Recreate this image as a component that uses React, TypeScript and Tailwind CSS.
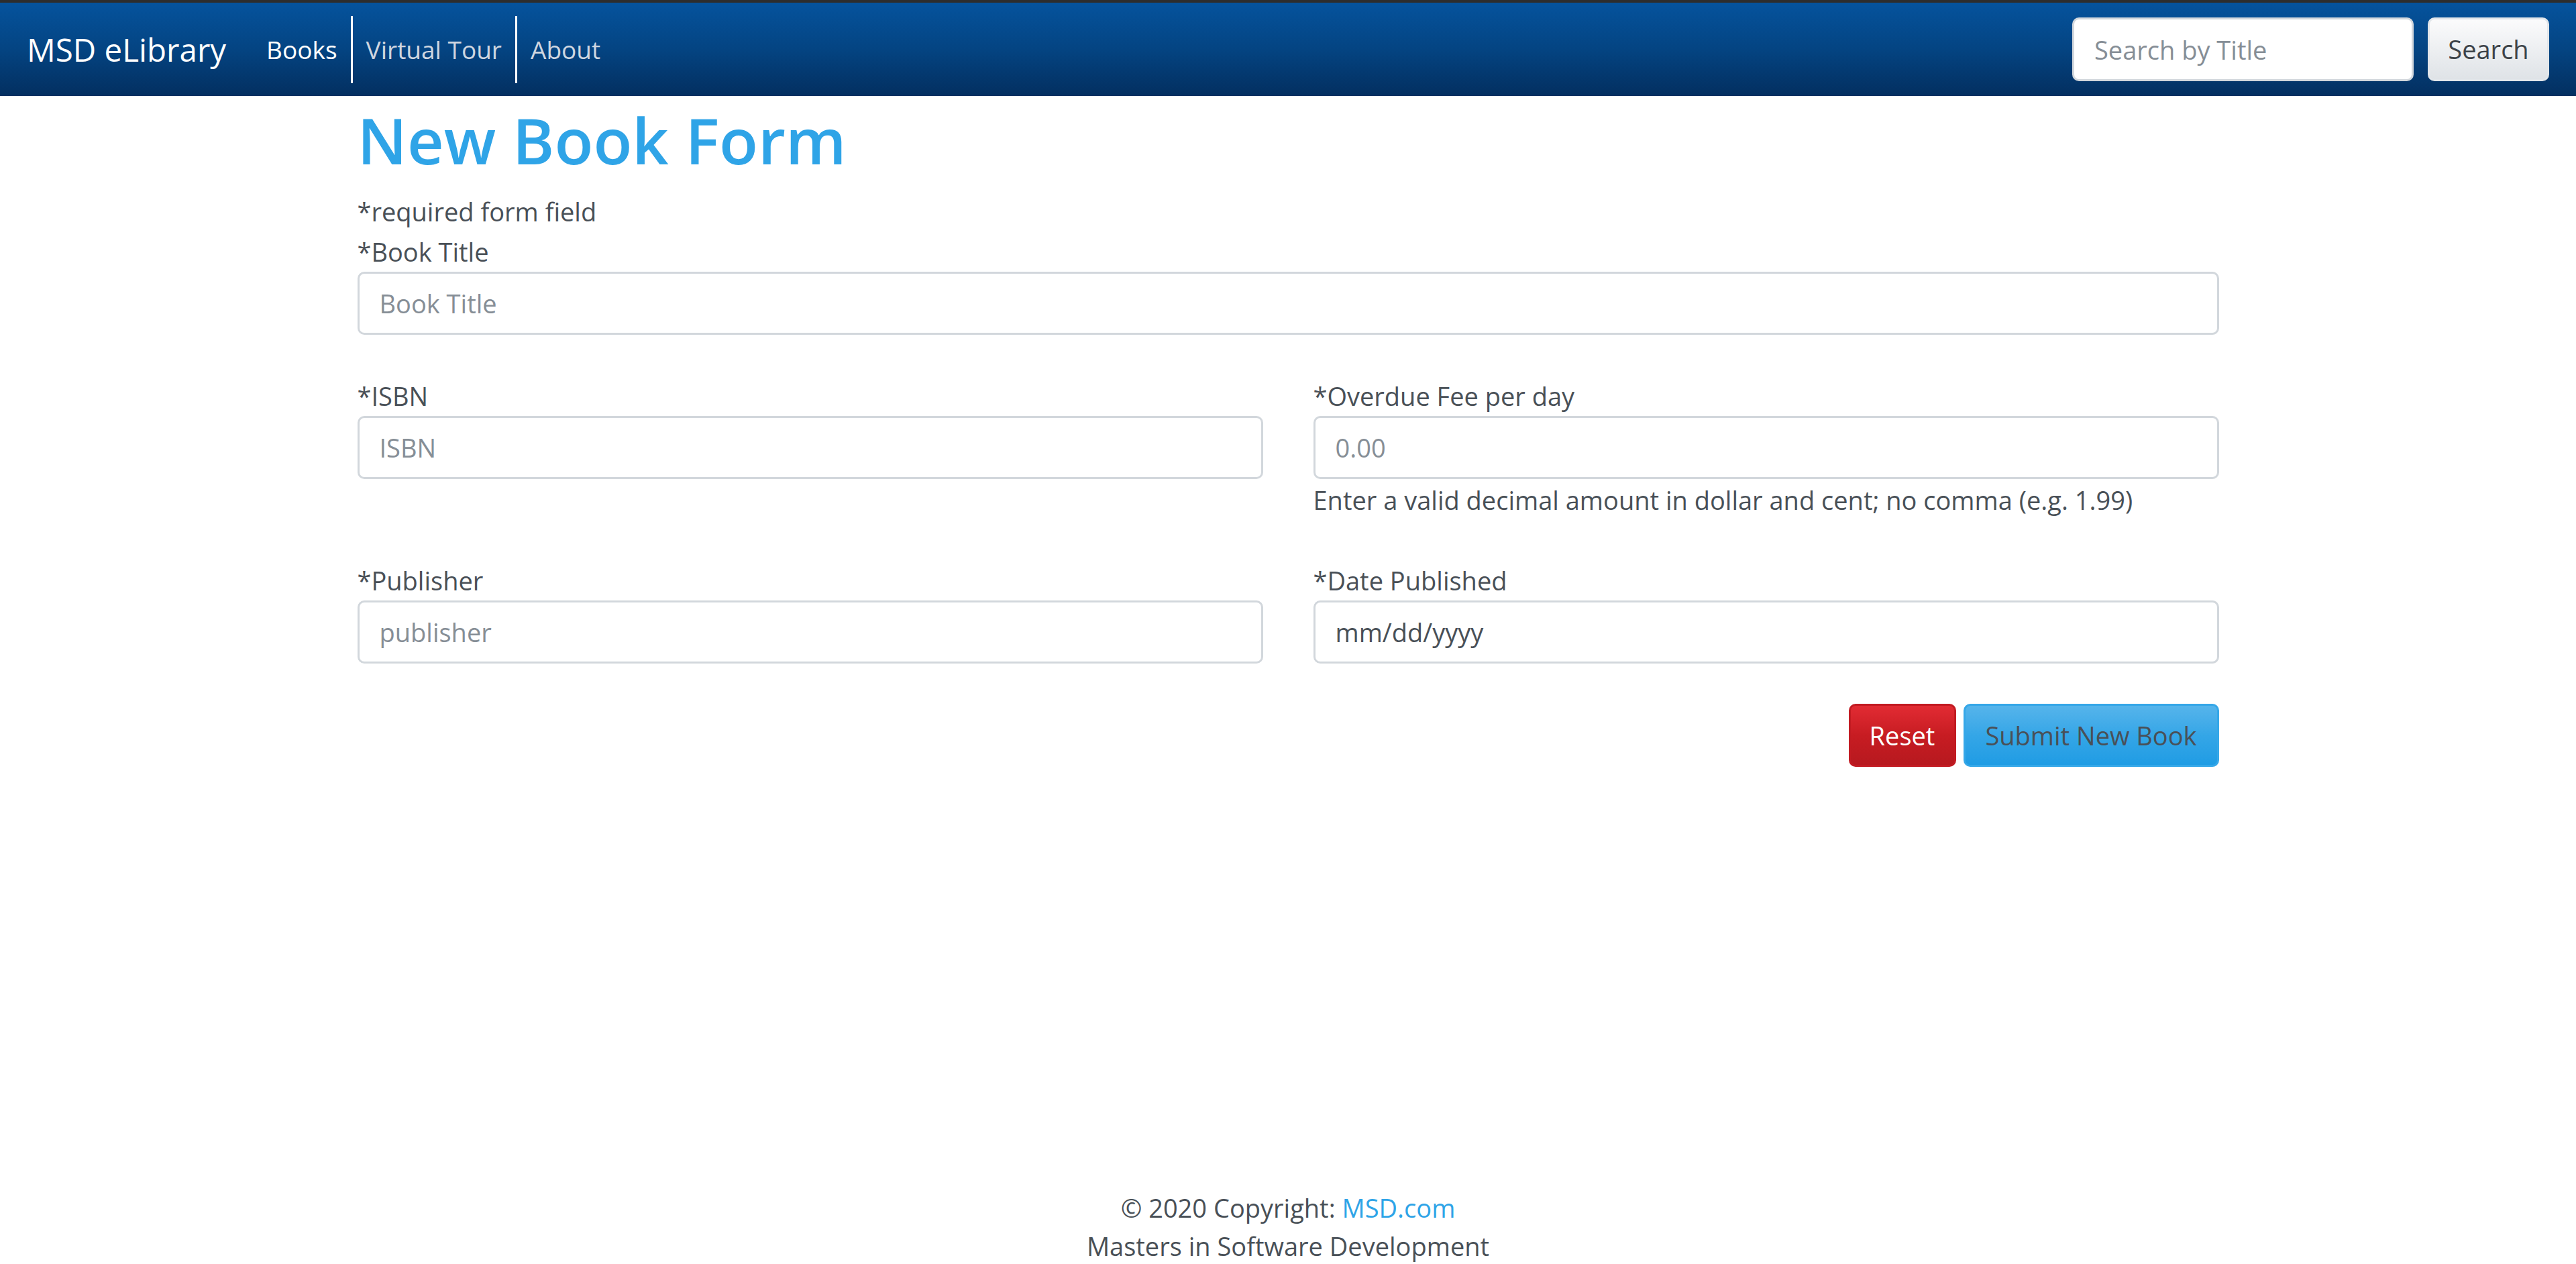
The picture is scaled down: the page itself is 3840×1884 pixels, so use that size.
import { useState } from 'react';

const navLinks = [
  { label: 'Books', active: true, divider: true },
  { label: 'Virtual Tour', active: false, divider: true },
  { label: 'About', active: false, divider: false },
];

const inputClass =
  'block w-full h-[94px] px-[30px] rounded-[10px] border-[3px] border-[#d2d7dc] bg-white text-[38px] text-[#495057] placeholder:text-[#868e96] outline-none';

function Field({
  label,
  placeholder,
  help,
  darkPlaceholder,
}: {
  label: string;
  placeholder: string;
  help?: string;
  darkPlaceholder?: boolean;
}) {
  const [value, setValue] = useState('');
  return (
    <div>
      <label className="block leading-[60px]">{label}</label>
      <input
        type="text"
        value={value}
        onChange={(e) => setValue(e.target.value)}
        placeholder={placeholder}
        className={`${inputClass} ${darkPlaceholder ? 'placeholder:text-[#495057]' : ''}`}
      />
      {help && <p className="mt-px leading-[60px]">{help}</p>}
    </div>
  );
}

export default function App() {
  return (
    <div className="min-h-screen flex flex-col bg-white font-['Open_Sans',sans-serif] text-[38px] text-[#495057]">
      <div className="h-[4px] bg-[#2d2d2d]" />
      <nav className="h-[139px] px-[40px] flex items-center bg-linear-to-b from-[#05539d] via-[#044482] to-[#032f60]">
        <a href="#" className="text-[47.5px] leading-[75px] text-white mr-[40px]">
          MSD eLibrary
        </a>
        <ul className="flex items-center">
          {navLinks.map((link) => (
            <li key={link.label}>
              <a
                href="#"
                className={`block h-[100px] px-[20px] text-[37px] leading-[100px] ${
                  link.active ? 'text-white' : 'text-[#cfd6e0]'
                } ${link.divider ? 'border-r-[3px] border-white' : ''}`}
              >
                {link.label}
              </a>
            </li>
          ))}
        </ul>
        <form className="ml-auto flex items-center" onSubmit={(e) => e.preventDefault()}>
          <input
            type="search"
            placeholder="Search by Title"
            className="w-[509px] h-[95px] px-[30px] mr-[21px] rounded-[10px] border-[3px] border-[#d2d7dc] bg-white text-[38px] text-[#495057] placeholder:text-[#868e96] outline-none"
          />
          <button className="w-[181px] h-[95px] rounded-[10px] border-[3px] border-[#e2e6ea] bg-linear-to-b from-[#fbfbfc] to-[#dfe3e7] text-[#3d4349] text-[38px]">
            Search
          </button>
        </form>
      </nav>

      <main className="w-[2775px] mx-auto">
        <h1 className="mt-[5px] mb-[17px] text-[95px] leading-[120px] font-semibold text-[#2fa4e7]">
          New Book Form
        </h1>
        <p className="leading-[60px]">*required form field</p>

        <div className="mb-[61px]">
          <Field label="*Book Title" placeholder="Book Title" />
        </div>

        <div className="grid grid-cols-2 gap-x-[75px] mb-[60px] items-start">
          <Field label="*ISBN" placeholder="ISBN" />
          <Field
            label="*Overdue Fee per day"
            placeholder="0.00"
            help="Enter a valid decimal amount in dollar and cent; no comma (e.g. 1.99)"
          />
        </div>

        <div className="grid grid-cols-2 gap-x-[75px] mb-[60px]">
          <Field label="*Publisher" placeholder="publisher" />
          <Field label="*Date Published" placeholder="mm/dd/yyyy" darkPlaceholder />
        </div>

        <div className="flex justify-end gap-[11px]">
          <button
            type="reset"
            className="w-[160px] h-[94px] rounded-[10px] border-[3px] border-[#c21b22] bg-linear-to-b from-[#e22b33] via-[#c71c22] to-[#b7191f] text-white text-[38px]"
          >
            Reset
          </button>
          <button
            type="submit"
            className="w-[381px] h-[94px] rounded-[10px] border-[3px] border-[#35a7e8] bg-linear-to-b from-[#55b4eb] via-[#34a6e7] to-[#1f9ce4] text-[#495057] text-[38px]"
          >
            Submit New Book
          </button>
        </div>
      </main>

      <footer className="mt-auto text-center">
        <p className="leading-[60px]">
          © 2020 Copyright:{' '}
          <a href="#" className="text-[#2fa4e7]">
            MSD.com
          </a>
        </p>
        <p className="leading-[54px]">Masters in Software Development</p>
      </footer>
    </div>
  );
}
